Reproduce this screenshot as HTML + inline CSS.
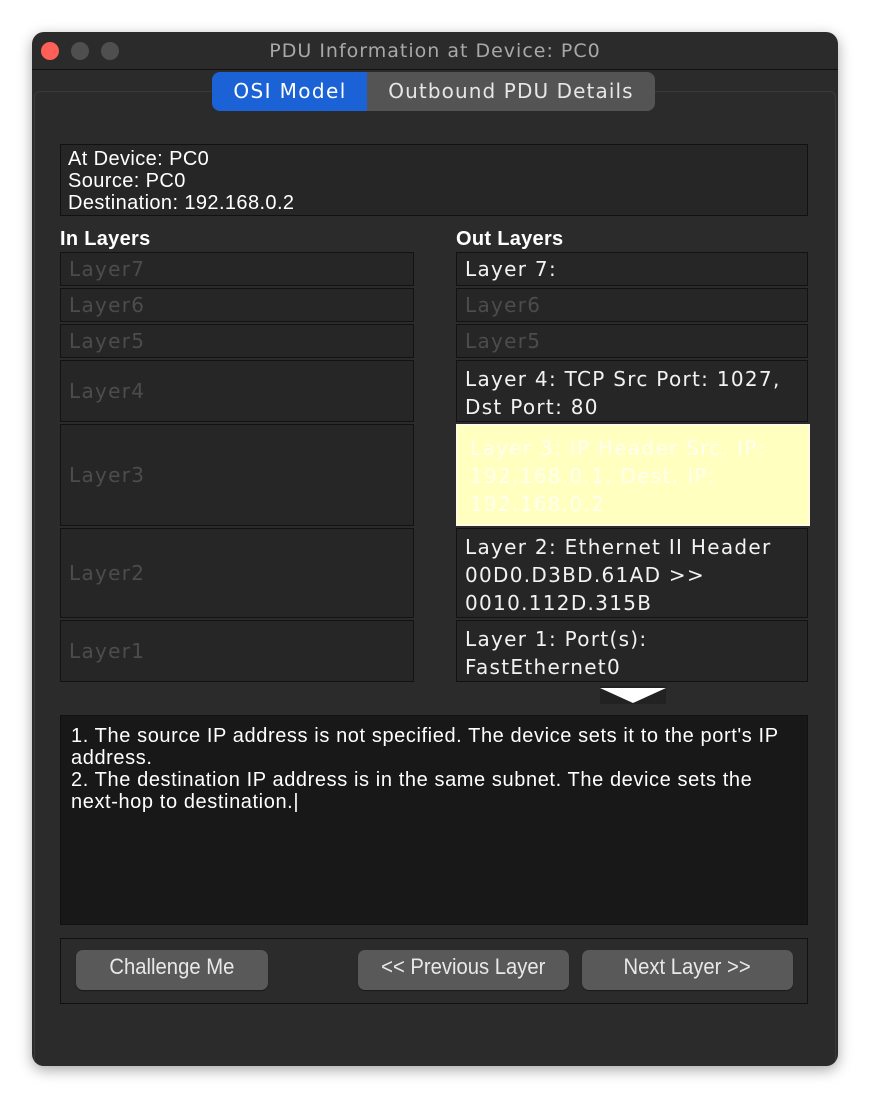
<!DOCTYPE html>
<html><head><style>
*{margin:0;padding:0;box-sizing:border-box}
body{width:870px;height:1098px;background:#fff;position:relative;overflow:hidden;font-family:"Liberation Sans",sans-serif}
.win{position:absolute;left:32px;top:32px;width:806px;height:1034px;background:#2b2b2b;border-radius:12px;box-shadow:0 4px 14px rgba(0,0,0,.35);overflow:hidden}
.title{position:absolute;left:0;top:0;width:806px;height:38px;border-bottom:1px solid #111;text-align:center;color:#a8a8a8;font-size:19px;letter-spacing:1px;line-height:38px;font-family:"DejaVu Sans",sans-serif}
.dot{position:absolute;top:10px;width:18px;height:18px;border-radius:50%;background:#4f4f4f}
.a{position:absolute}
.panel{position:absolute;left:2px;top:59px;width:802px;height:990px;border:1px solid #3a3a3a;border-radius:6px;background:#2b2b2b}
.tab{position:absolute;top:40px;height:39px;font-family:"DejaVu Sans",sans-serif;font-size:20px;line-height:39px;text-align:center;color:#e6e6e6}
.box{position:absolute;border:1px solid #121212;background:#262626;font-family:"DejaVu Sans",sans-serif;font-size:20px;letter-spacing:1.3px;color:#4c4c4c;padding-left:8px;display:flex;align-items:center;white-space:nowrap}
.o{color:#f2f2f2;align-items:flex-start;padding-top:4px;line-height:28px}
.btn{position:absolute;top:918px;height:40px;background:#595959;border-radius:7px;color:#e8e8e8;font-size:22px;line-height:34px;text-align:center;box-shadow:0 1px 1px rgba(0,0,0,.4);white-space:nowrap}
.btn span{display:inline-block;transform:scaleX(.92)}
</style></head><body>
<div class="win">
<div class="title">PDU Information at Device: PC0</div>
<div class="dot" style="left:9px;background:#fe5f57"></div>
<div class="dot" style="left:39px"></div>
<div class="dot" style="left:69px"></div>
<div class="panel"></div>
<div class="tab" style="left:180px;width:156px;background:#1b62d6;border-radius:8px 0 0 8px;color:#fff;letter-spacing:1.4px">OSI Model</div>
<div class="tab" style="left:335px;width:288px;background:#545454;border-radius:0 8px 8px 0;letter-spacing:1.1px">Outbound PDU Details</div>

<div class="a" style="left:28px;top:112px;width:748px;height:72px;border:1px solid #111;background:#262626;color:#fff;font-size:20px;letter-spacing:.4px;line-height:22px;padding:3px 0 0 7px">At Device: PC0<br>Source: PC0<br>Destination: 192.168.0.2</div>

<div class="a" style="left:28px;top:196px;color:#fff;font-weight:bold;font-size:20px;letter-spacing:.3px">In Layers</div>
<div class="a" style="left:424px;top:196px;color:#fff;font-weight:bold;font-size:20px;letter-spacing:.3px">Out Layers</div>

<div class="box" style="left:28px;top:220px;width:354px;height:34px">Layer7</div>
<div class="box" style="left:28px;top:256px;width:354px;height:34px">Layer6</div>
<div class="box" style="left:28px;top:292px;width:354px;height:34px">Layer5</div>
<div class="box" style="left:28px;top:328px;width:354px;height:62px">Layer4</div>
<div class="box" style="left:28px;top:392px;width:354px;height:102px">Layer3</div>
<div class="box" style="left:28px;top:496px;width:354px;height:90px">Layer2</div>
<div class="box" style="left:28px;top:588px;width:354px;height:62px">Layer1</div>

<div class="box o" style="left:424px;top:220px;width:352px;height:34px;padding-top:2px">Layer 7:</div>
<div class="box" style="left:424px;top:256px;width:352px;height:34px">Layer6</div>
<div class="box" style="left:424px;top:292px;width:352px;height:34px">Layer5</div>
<div class="box o" style="left:424px;top:328px;width:352px;height:62px">Layer 4: TCP Src Port: 1027,<br>Dst Port: 80</div>
<div class="box o" style="left:424px;top:392px;width:354px;height:102px;background:#ffffbf;border:2px solid #fffbe0;padding-left:12px;padding-top:8px;color:#fffff0">Layer 3: IP Header Src. IP:<br>192.168.0.1, Dest. IP:<br>192.168.0.2</div>
<div class="box o" style="left:424px;top:496px;width:352px;height:90px">Layer 2: Ethernet II Header<br>00D0.D3BD.61AD &gt;&gt;<br>0010.112D.315B</div>
<div class="box o" style="left:424px;top:588px;width:352px;height:62px">Layer 1: Port(s):<br>FastEthernet0</div>

<svg class="a" style="left:568px;top:654px" width="66" height="18"><rect width="66" height="18" fill="#222"/><polygon points="0,2 66,2 33,17" fill="#fff"/></svg>

<div class="a" style="left:28px;top:683px;width:748px;height:210px;border:1px solid #111;background:#181818;color:#fff;font-size:20px;letter-spacing:.6px;line-height:22px;padding:9px 8px 0 10px">1. The source IP address is not specified. The device sets it to the port's IP address.<br>2. The destination IP address is in the same subnet. The device sets the next-hop to destination.|</div>

<div class="a" style="left:28px;top:906px;width:748px;height:66px;border:1px solid #111;background:#2b2b2b"></div>
<div class="btn" style="left:44px;width:192px"><span>Challenge Me</span></div>
<div class="btn" style="left:326px;width:211px"><span>&lt;&lt; Previous Layer</span></div>
<div class="btn" style="left:550px;width:211px"><span>Next Layer &gt;&gt;</span></div>
</div>
</body></html>
